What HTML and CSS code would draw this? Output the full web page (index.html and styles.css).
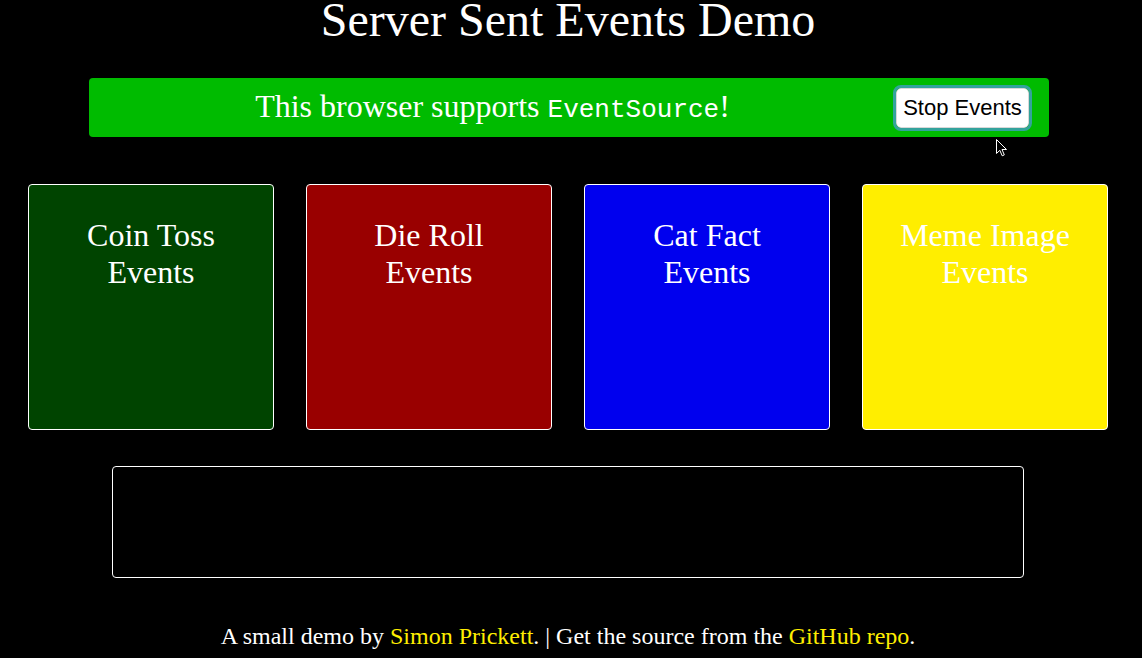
FILE: index.html
```html
<!DOCTYPE html>
<html lang="en">
<head>
<meta charset="utf-8">
<title>Server Sent Events Demo</title>
<link rel="stylesheet" href="styles.css">
</head>
<body>
<main class="page">
  <h1 class="title">Server Sent Events Demo</h1>
  <div class="support-bar">
    <p class="support-text">This browser supports <code class="code">EventSource</code>!</p>
    <button class="stop-btn" type="button">Stop Events</button>
  </div>
  <section class="cards">
    <div class="card card-coin"><h2 class="card-title">Coin Toss<br>Events</h2></div>
    <div class="card card-die"><h2 class="card-title">Die Roll<br>Events</h2></div>
    <div class="card card-cat"><h2 class="card-title">Cat Fact<br>Events</h2></div>
    <div class="card card-meme"><h2 class="card-title">Meme Image<br>Events</h2></div>
  </section>
  <div class="log-box"></div>
  <footer class="footer">A small demo by <a class="link" href="#">Simon Prickett</a>. | Get the source from the <a class="link" href="#">GitHub repo</a>.</footer>
</main>
<svg class="cursor" width="12" height="18" viewBox="0 0 12 18" aria-hidden="true">
  <path d="M0.5 0.5 L0.5 14.5 L3.8 11.3 L6.2 16.8 L8.3 15.9 L6 10.5 L10.5 10.5 Z" fill="#000" stroke="#fff" stroke-width="1"/>
</svg>
</body>
</html>
```

FILE: styles.css
```css
html, body {
  margin: 0;
  padding: 0;
  background: #000;
}
body {
  color: #fff;
  font-family: "Liberation Serif", "Times New Roman", serif;
  height: 658px;
  overflow: hidden;
  position: relative;
}
.page {
  width: 1136px;
  display: flex;
  flex-direction: column;
  align-items: center;
}
.title {
  margin: 0;
  font-size: 48px;
  font-weight: normal;
  line-height: 40px;
  height: 44px;
  text-align: center;
}
.support-bar {
  margin-top: 34px;
  margin-left: 2px;
  width: 960px;
  height: 59px;
  background: #00bb00;
  border-radius: 4px;
  display: flex;
  align-items: center;
  box-sizing: border-box;
  padding-right: 20px;
}
.support-text {
  flex: 1;
  margin: 0;
  text-align: center;
  font-size: 32px;
  line-height: 36px;
}
.code {
  font-family: "Liberation Mono", "Courier New", monospace;
  font-size: 26px;
}
.stop-btn {
  width: 133px;
  height: 40px;
  background: #fff;
  border: 1px solid #d8d8d8;
  border-radius: 5px;
  outline: 3px solid #33a39c;
  outline-offset: 0;
  font-family: "Liberation Sans", Arial, sans-serif;
  font-size: 22px;
  color: #000;
  padding: 0;
  margin-top: 1px;
}
.cards {
  margin-top: 47px;
  display: flex;
  gap: 32px;
}
.card {
  width: 246px;
  height: 246px;
  box-sizing: border-box;
  border: 1px solid #fff;
  border-radius: 4px;
  padding-top: 32px;
  text-align: center;
}
.card-coin { background: #004400; }
.card-die { background: #990000; }
.card-cat { background: #0000ee; }
.card-meme { background: #ffee00; }
.card-title {
  margin: 0;
  font-size: 32px;
  font-weight: normal;
  line-height: 37px;
}
.log-box {
  margin-top: 36px;
  width: 912px;
  height: 112px;
  box-sizing: border-box;
  border: 1px solid #fff;
  border-radius: 4px;
}
.footer {
  margin-top: 45px;
  font-size: 24px;
  line-height: 27px;
  text-align: center;
}
.link {
  color: #ffee00;
  text-decoration: none;
}
.cursor {
  position: absolute;
  left: 996px;
  top: 139px;
}
```
